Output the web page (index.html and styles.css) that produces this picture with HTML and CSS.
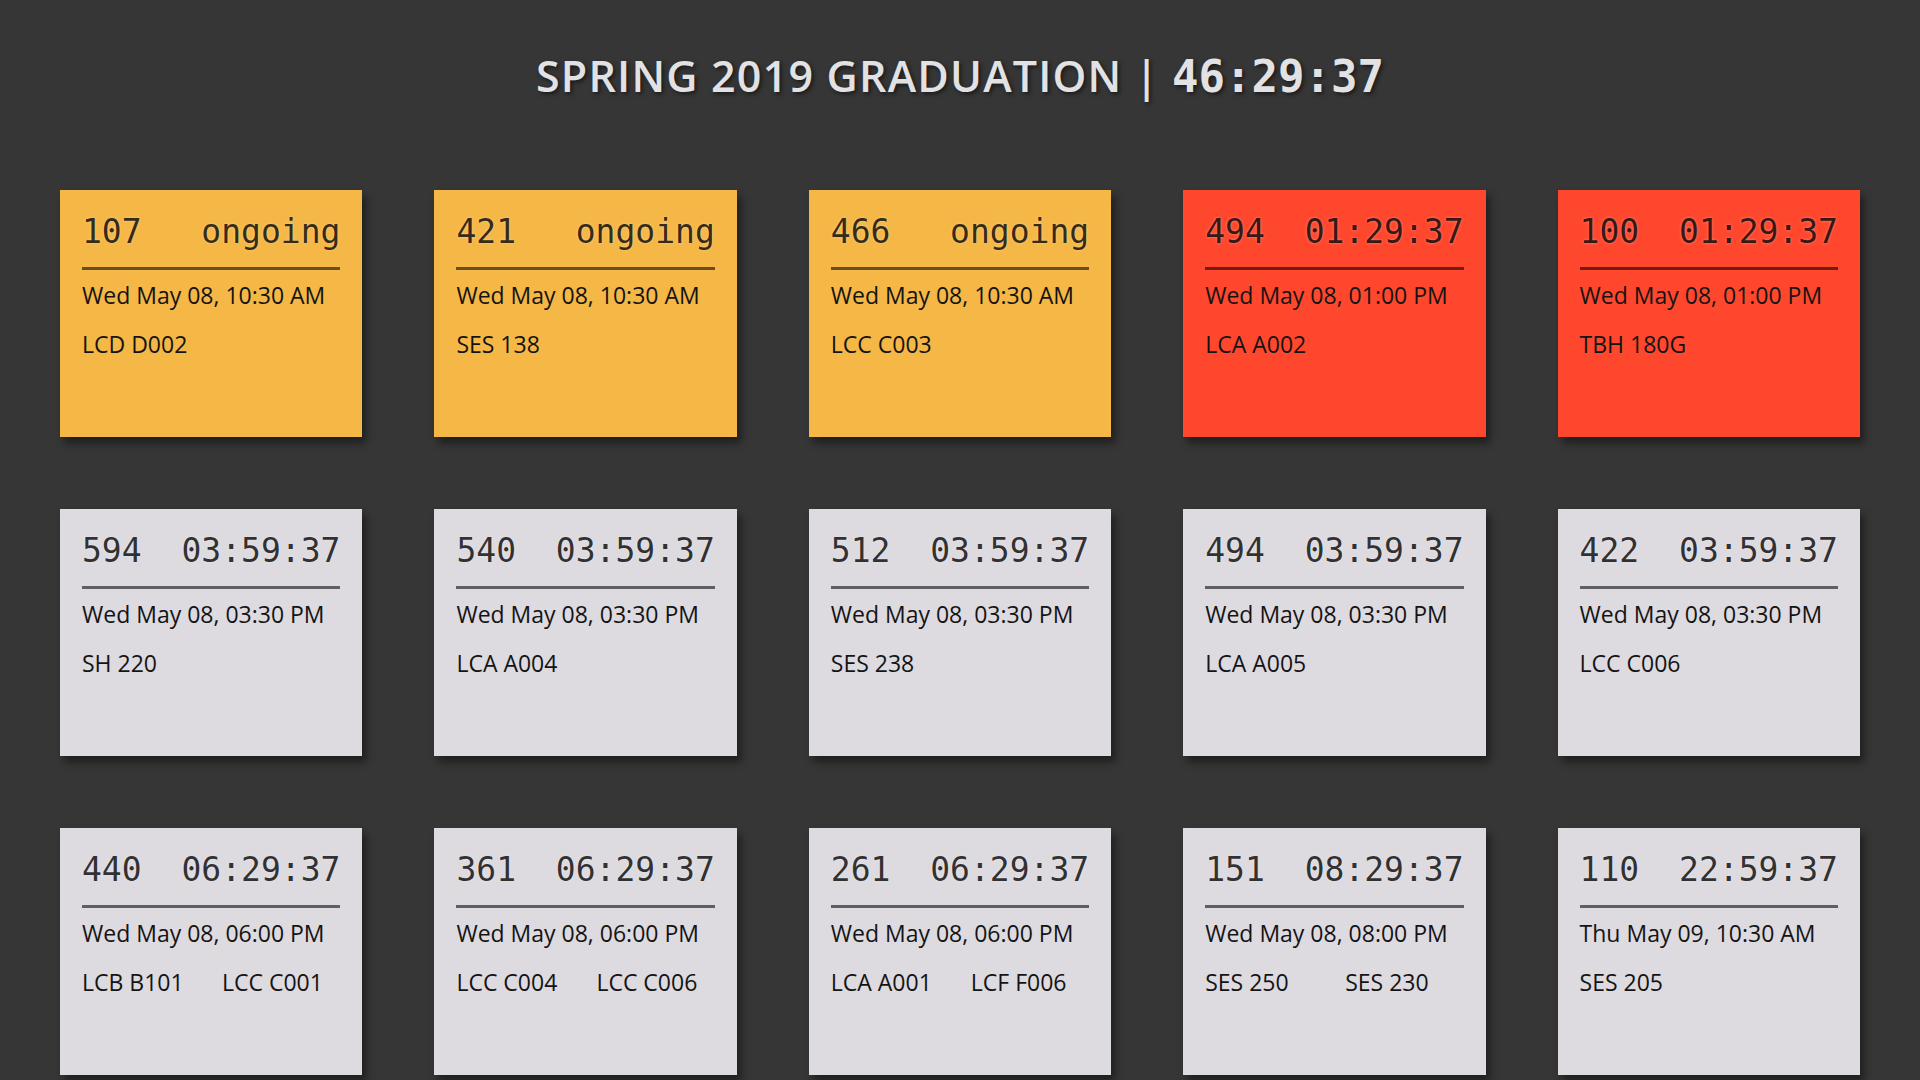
FILE: index.html
```html
<!DOCTYPE html>
<html lang="en">
<head>
<meta charset="utf-8">
<title>Spring 2019 Graduation</title>
<link rel="stylesheet" href="styles.css">
</head>
<body>
<h1 class="title">SPRING 2019 GRADUATION | <span class="clock">46:29:37</span></h1>
<main class="grid">
  <div class="card ongoing"><div class="head"><span>107</span><span>ongoing</span></div><div class="date">Wed May 08, 10:30 AM</div><div class="locs"><span class="loc">LCD D002</span></div></div>
  <div class="card ongoing"><div class="head"><span>421</span><span>ongoing</span></div><div class="date">Wed May 08, 10:30 AM</div><div class="locs"><span class="loc">SES 138</span></div></div>
  <div class="card ongoing"><div class="head"><span>466</span><span>ongoing</span></div><div class="date">Wed May 08, 10:30 AM</div><div class="locs"><span class="loc">LCC C003</span></div></div>
  <div class="card soon"><div class="head"><span>494</span><span>01:29:37</span></div><div class="date">Wed May 08, 01:00 PM</div><div class="locs"><span class="loc">LCA A002</span></div></div>
  <div class="card soon"><div class="head"><span>100</span><span>01:29:37</span></div><div class="date">Wed May 08, 01:00 PM</div><div class="locs"><span class="loc">TBH 180G</span></div></div>

  <div class="card"><div class="head"><span>594</span><span>03:59:37</span></div><div class="date">Wed May 08, 03:30 PM</div><div class="locs"><span class="loc">SH 220</span></div></div>
  <div class="card"><div class="head"><span>540</span><span>03:59:37</span></div><div class="date">Wed May 08, 03:30 PM</div><div class="locs"><span class="loc">LCA A004</span></div></div>
  <div class="card"><div class="head"><span>512</span><span>03:59:37</span></div><div class="date">Wed May 08, 03:30 PM</div><div class="locs"><span class="loc">SES 238</span></div></div>
  <div class="card"><div class="head"><span>494</span><span>03:59:37</span></div><div class="date">Wed May 08, 03:30 PM</div><div class="locs"><span class="loc">LCA A005</span></div></div>
  <div class="card"><div class="head"><span>422</span><span>03:59:37</span></div><div class="date">Wed May 08, 03:30 PM</div><div class="locs"><span class="loc">LCC C006</span></div></div>

  <div class="card"><div class="head"><span>440</span><span>06:29:37</span></div><div class="date">Wed May 08, 06:00 PM</div><div class="locs"><span class="loc">LCB B101</span><span class="loc">LCC C001</span></div></div>
  <div class="card"><div class="head"><span>361</span><span>06:29:37</span></div><div class="date">Wed May 08, 06:00 PM</div><div class="locs"><span class="loc">LCC C004</span><span class="loc">LCC C006</span></div></div>
  <div class="card"><div class="head"><span>261</span><span>06:29:37</span></div><div class="date">Wed May 08, 06:00 PM</div><div class="locs"><span class="loc">LCA A001</span><span class="loc">LCF F006</span></div></div>
  <div class="card"><div class="head"><span>151</span><span>08:29:37</span></div><div class="date">Wed May 08, 08:00 PM</div><div class="locs"><span class="loc">SES 250</span><span class="loc">SES 230</span></div></div>
  <div class="card"><div class="head"><span>110</span><span>22:59:37</span></div><div class="date">Thu May 09, 10:30 AM</div><div class="locs"><span class="loc">SES 205</span></div></div>
</main>
</body>
</html>
```
FILE: styles.css
```css
html, body {
  margin: 0;
  padding: 0;
  background: #363636;
  height: 100%;
  overflow: hidden;
}

body {
  font-family: "Open Sans", "DejaVu Sans", sans-serif;
}

.title {
  margin: 47px 0 84px;
  text-align: center;
  font-family: "Open Sans", sans-serif;
  font-weight: 600;
  font-size: 43px;
  line-height: 58px;
  color: #e2e2e4;
  text-shadow: 2px 2px 4px rgba(0, 0, 0, 0.55);
  letter-spacing: 1.2px;
}

.clock {
  font-family: "DejaVu Sans Mono", monospace;
  font-weight: bold;
  font-size: 44px;
  letter-spacing: 0;
}

.grid {
  display: grid;
  grid-template-columns: repeat(5, minmax(0, 1fr));
  column-gap: 72px;
  row-gap: 72px;
  padding: 0 60px;
}

.card {
  height: 247px;
  box-sizing: border-box;
  padding: 22px 22px 0;
  background: #dddae0;
  box-shadow: 4px 6px 8px rgba(0, 0, 0, 0.45);
  overflow: hidden;
}

.card.ongoing { background: #f5b746; }
.card.soon { background: #ff472d; }

.head {
  display: flex;
  justify-content: space-between;
  font-family: "DejaVu Sans Mono", monospace;
  font-size: 33px;
  line-height: 40px;
  color: rgba(0, 0, 0, 0.8);
  text-shadow: 0 0 3px rgba(255, 255, 255, 0.35);
  padding-bottom: 15px;
  border-bottom: 3px solid rgba(0, 0, 0, 0.57);
  white-space: nowrap;
}

.date {
  margin-top: 10px;
  font-size: 23px;
  line-height: 30px;
  color: #141414;
  white-space: nowrap;
}

.locs {
  display: flex;
  margin-top: 19px;
  font-size: 23px;
  line-height: 30px;
  color: #141414;
  white-space: nowrap;
}

.loc {
  flex: none;
  width: 140px;
}
```
